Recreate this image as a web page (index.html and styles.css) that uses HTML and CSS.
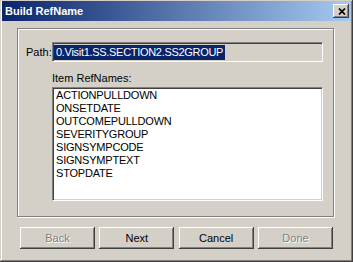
FILE: index.html
```html
<!DOCTYPE html>
<html lang="en">
<head>
  <meta charset="UTF-8">
  <title>Build RefName</title>
  <link rel="stylesheet" href="styles.css">
</head>

<body>
  <div class="dlg">

    <div class="dlg-title">
      <span class="dlg-title-text">Build RefName</span>
      <button type="button" class="dlg-close">
        <svg width="8" height="7" viewBox="0 0 8 7">
          <path d="M1 0.5 L7 6.5 M7 0.5 L1 6.5" stroke="#000" stroke-width="1.7" fill="none"/>
        </svg>
      </button>
    </div>

    <div class="dlg-body">
      <div class="dlg-group">
        <div class="dlg-path">
          <span class="dlg-label">Path:</span>
          <div class="dlg-field"><span class="dlg-sel">0.Visit1.SS.SECTION2.SS2GROUP</span></div>
        </div>

        <div class="dlg-list-label">Item RefNames:</div>
        <ul class="dlg-list">
          <li>ACTIONPULLDOWN</li>
          <li>ONSETDATE</li>
          <li>OUTCOMEPULLDOWN</li>
          <li>SEVERITYGROUP</li>
          <li>SIGNSYMPCODE</li>
          <li>SIGNSYMPTEXT</li>
          <li>STOPDATE</li>
        </ul>
      </div>

      <div class="dlg-buttons">
        <button type="button" class="dlg-btn" disabled>Back</button>
        <button type="button" class="dlg-btn">Next</button>
        <button type="button" class="dlg-btn">Cancel</button>
        <button type="button" class="dlg-btn" disabled>Done</button>
      </div>
    </div>

  </div>
</body>
</html>
```

FILE: styles.css
```css
html,
body {
  margin: 0;
  padding: 0;
  background: #d4d0c8;
}

body {
  font-family: "Liberation Sans", Arial, sans-serif;
  font-size: 11px;
  color: #000;
}

.dlg {
  box-sizing: border-box;
  width: 353px;
  height: 262px;
  padding: 1px 2px 2px 2px;
  background: #d4d0c8;
  box-shadow: inset -1px -1px #404040, inset 1px 1px #d4d0c8,
    inset -2px -2px #808080, inset 2px 2px #fff;
}

.dlg-title {
  display: flex;
  align-items: center;
  height: 20px;
  padding: 0 2px 0 3px;
  background: linear-gradient(to right, #0a246a, #a6caf0);
}

.dlg-title-text {
  flex: 1;
  color: #fff;
  font-weight: bold;
  line-height: 20px;
}

.dlg-close {
  display: flex;
  align-items: center;
  justify-content: center;
  box-sizing: border-box;
  width: 16px;
  height: 14px;
  padding: 0 0 0 1px;
  border: none;
  background: #d4d0c8;
  box-shadow: inset -1px -1px #404040, inset 1px 1px #fff,
    inset -2px -2px #808080, inset 2px 2px #d4d0c8;
}

.dlg-body {
  padding: 7px 0 0 15px;
}

.dlg-group {
  box-sizing: border-box;
  width: 317px;
  height: 189px;
  padding: 13px 10px 0 8px;
  border: 1px solid #808080;
  box-shadow: inset 1px 1px #fff, 1px 1px #fff;
}

.dlg-path {
  display: flex;
  align-items: center;
}

.dlg-label {
  width: 26px;
  line-height: 13px;
}

.dlg-field {
  box-sizing: border-box;
  width: 271px;
  height: 20px;
  padding: 1px 0 0 1px;
  line-height: 16px;
  letter-spacing: -0.3px;
  background: #d4d0c8;
  border-top: 1px solid #808080;
  border-left: 1px solid #808080;
  border-right: 1px solid #fff;
  border-bottom: 1px solid #fff;
  box-shadow: inset 1px 1px #404040;
}

.dlg-sel {
  display: inline-block;
  padding: 0 2px;
  line-height: 15px;
  color: #fff;
  background: #0a246a;
}

.dlg-list-label {
  margin: 10px 0 2px 26px;
  line-height: 13px;
}

.dlg-list {
  box-sizing: border-box;
  width: 271px;
  height: 114px;
  margin: 0 0 0 26px;
  padding: 1px 3px;
  list-style: none;
  letter-spacing: -0.2px;
  background: #fff;
  border-top: 1px solid #808080;
  border-left: 1px solid #808080;
  border-right: 1px solid #fff;
  border-bottom: 1px solid #fff;
  box-shadow: inset 1px 1px #404040, inset -1px -1px #d4d0c8;
}

.dlg-list li {
  line-height: 13px;
}

.dlg-buttons {
  display: flex;
  justify-content: space-between;
  width: 313px;
  margin: 10px 0 0 3px;
}

.dlg-btn {
  box-sizing: border-box;
  width: 75px;
  height: 22px;
  padding: 0;
  border: none;
  font-family: "Liberation Sans", Arial, sans-serif;
  font-size: 11px;
  font-weight: normal;
  color: #000;
  background: #d4d0c8;
  box-shadow: inset -1px -1px #404040, inset 1px 1px #fff,
    inset -2px -2px #808080, inset 2px 2px #d4d0c8;
}

.dlg-btn:disabled {
  color: #808080;
  text-shadow: 1px 1px #fff;
}
```
